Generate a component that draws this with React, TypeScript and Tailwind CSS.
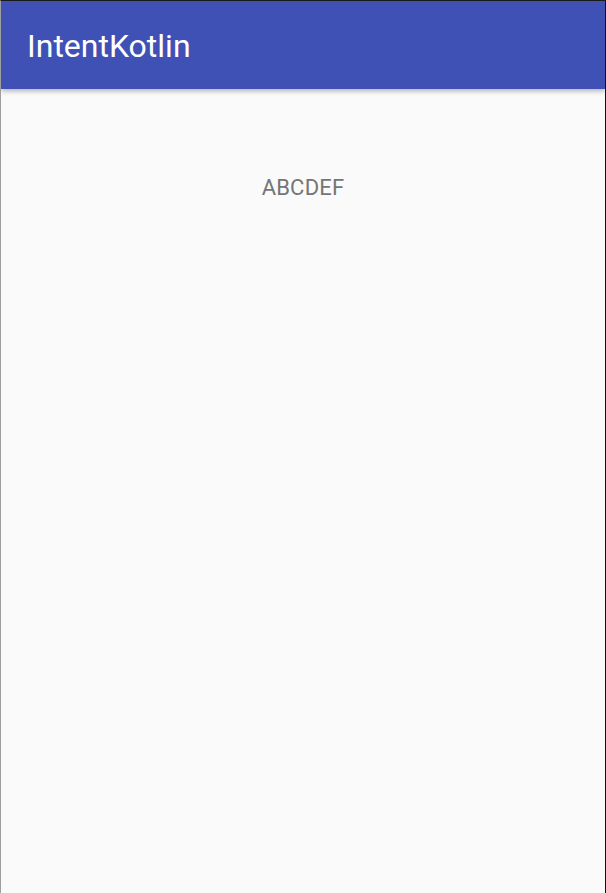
import React from "react";

export default function App() {
  return (
    <div
      className="relative w-[606px] h-[893px] flex flex-col bg-[#fafafa] border-t border-t-[#1a1a1a] border-l border-l-[#9e9e9e] border-r border-r-[#111111] overflow-hidden"
      style={{ fontFamily: "Roboto, 'Noto Sans', sans-serif" }}
    >
      <div className="absolute left-[-1px] top-[32px] w-[2px] h-[42px] bg-[#b5502e]" />
      <header className="relative z-10 h-[88px] shrink-0 flex items-center bg-[#3f51b5] pl-[26px] pt-[2px] shadow-[0_2px_5px_rgba(0,0,0,0.3)]">
        <h1 className="text-white text-[32px] leading-[37px] font-normal">IntentKotlin</h1>
      </header>
      <main className="flex-1 flex flex-col items-center pt-[86px]">
        <p className="text-[#757575] text-[22px] leading-[26px] tracking-[0.2px]">ABCDEF</p>
      </main>
    </div>
  );
}
